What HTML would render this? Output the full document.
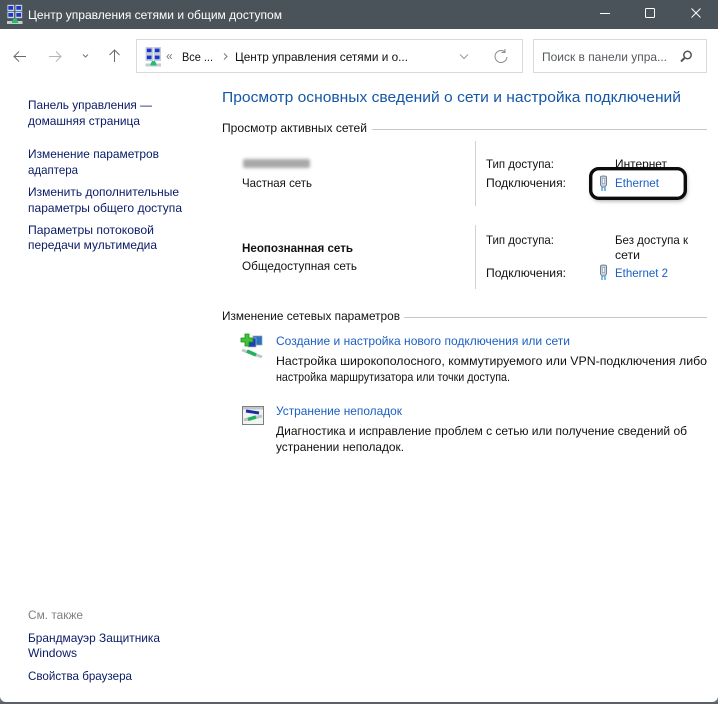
<!DOCTYPE html>
<html lang="ru"><head><meta charset="utf-8"><title>Центр управления сетями и общим доступом</title>
<style>
html,body{margin:0;padding:0;background:#fff}
svg{display:block}
text{font-family:"Liberation Sans","DejaVu Sans",sans-serif;font-size:12px;fill:#111;white-space:pre}
.n{fill:#0a1a66}
.l{fill:#1a5fc4}
.h{fill:#55595e}
</style></head><body>
<svg width="718" height="704" viewBox="0 0 718 704" xmlns="http://www.w3.org/2000/svg">
<defs>
<filter id="sh" x="-20%" y="-40%" width="140%" height="180%"><feGaussianBlur stdDeviation="2"/></filter>
<filter id="bl" x="-20%" y="-60%" width="140%" height="220%"><feGaussianBlur stdDeviation="1.5"/></filter>
<g id="net">
<rect x="0" y="0" width="6.500" height="6" fill="#dfe6ee" stroke="#9aa6b4" stroke-width=".5"/><rect x=".8" y="1" width="4.800" height="3.800" fill="#1c36c8"/>
<rect x="8" y="0" width="6.500" height="6" fill="#dfe6ee" stroke="#9aa6b4" stroke-width=".5"/><rect x="8.800" y="1" width="4.800" height="3.800" fill="#1c36c8"/>
<rect x="0" y="7" width="6.500" height="6" fill="#dfe6ee" stroke="#9aa6b4" stroke-width=".5"/><rect x=".8" y="8" width="4.800" height="3.800" fill="#1c36c8"/>
<rect x="8" y="7" width="6.500" height="6" fill="#dfe6ee" stroke="#9aa6b4" stroke-width=".5"/><rect x="8.800" y="8" width="4.800" height="3.800" fill="#1c36c8"/>
<rect x="-.5" y="16" width="15.500" height="3" fill="#c4cbd0"/><path d="M4.500 16.500L6 13.500H9L10.500 16.500V18H4.500Z" fill="#22c06a"/>
</g>
<g id="plug">
<path d="M-3 0Q-3-1 0-1T3 0V8L1.500 10H-1.500L-3 8Z" fill="#c6d1dc" stroke="#6d8195" stroke-width="1"/>
<rect x="-1.200" y="1.500" width="2.400" height="5" fill="#f2f6f9" stroke="#8698aa" stroke-width=".6"/>
<path d="M-1.500 10.500V14M1.500 10.500V14" stroke="#2c9cea" stroke-width="1.300"/>
</g>
</defs>
<rect width="718" height="704" fill="#fff"/>
<rect width="718" height="29" fill="#4b535a"/>
<use href="#net" transform="translate(7.500 5)"/>
<text x="28" y="19" textLength="254" lengthAdjust="spacingAndGlyphs" style="fill:#fff">Центр управления сетями и общим доступом</text>
<path d="M600 13.500H610" stroke="#fff" fill="none"/>
<rect x="645.500" y="8.500" width="9" height="9" rx="1" stroke="#fff" fill="none"/>
<path d="M691.500 8.500L700.500 17.500M700.500 8.500L691.500 17.500" stroke="#fff" fill="none"/>

<g fill="none" stroke-width="1">
<path d="M14 56.500H26M19 51.500L14 56.500L19 61.500" stroke="#6a6a6a"/>
<path d="M49 56.500H61M56 51.500L61 56.500L56 61.500" stroke="#b4b4b4"/>
<path d="M83 54.500L85.500 57L88 54.500" stroke="#777"/>
<path d="M114.500 62V50M109.500 55L114.500 50L119.500 55" stroke="#6a6a6a"/>
</g>
<rect x="136.500" y="39.500" width="386" height="33" fill="#fff" stroke="#d9d9d9"/>
<use href="#net" transform="translate(146 47.500)"/>
<text x="166" y="60" textLength="9" style="fill:#777">«</text>
<text x="182" y="61" textLength="31" lengthAdjust="spacingAndGlyphs">Все ...</text>
<path d="M224 53.500L227 56.500L224 59.500" fill="none" stroke="#777"/>
<text x="235" y="61" textLength="173" lengthAdjust="spacingAndGlyphs">Центр управления сетями и о...</text>
<path d="M460 54.500L464 58.500L468 54.500" fill="none" stroke="#999"/>
<path d="M505 52A6 6 0 1 0 507 57M505 49V52.500H501.500" fill="none" stroke="#8a8a8a"/>
<rect x="533.500" y="39.500" width="173" height="33" fill="#fff" stroke="#d9d9d9"/>
<text x="542" y="61" textLength="125" lengthAdjust="spacingAndGlyphs" class="h">Поиск в панели упра...</text>
<circle cx="687.500" cy="55" r="3.700" fill="none" stroke="#555" stroke-width="1.500"/><path d="M684.500 58L681 61.500" stroke="#555" stroke-width="2"/>

<text x="222" y="102" textLength="459" lengthAdjust="spacingAndGlyphs" style="fill:#1557a6;font-size:15px">Просмотр основных сведений о сети и настройка подключений</text>

<text x="28" y="109" textLength="124" lengthAdjust="spacingAndGlyphs" class="n">Панель управления —</text>
<text x="28" y="125" textLength="112" lengthAdjust="spacingAndGlyphs" class="n">домашняя страница</text>
<text x="28" y="158" textLength="131" lengthAdjust="spacingAndGlyphs" class="n">Изменение параметров</text>
<text x="28" y="174" textLength="50" lengthAdjust="spacingAndGlyphs" class="n">адаптера</text>
<text x="28" y="196" textLength="151" lengthAdjust="spacingAndGlyphs" class="n">Изменить дополнительные</text>
<text x="28" y="212" textLength="154" lengthAdjust="spacingAndGlyphs" class="n">параметры общего доступа</text>
<text x="28" y="234" textLength="126" lengthAdjust="spacingAndGlyphs" class="n">Параметры потоковой</text>
<text x="28" y="249" textLength="129" lengthAdjust="spacingAndGlyphs" class="n">передачи мультимедиа</text>
<text x="28" y="619" textLength="55" lengthAdjust="spacingAndGlyphs" style="fill:#808080">См. также</text>
<text x="28" y="642" textLength="132" lengthAdjust="spacingAndGlyphs" class="n">Брандмауэр Защитника</text>
<text x="28" y="657" textLength="49" lengthAdjust="spacingAndGlyphs" class="n">Windows</text>
<text x="28" y="680" textLength="104" lengthAdjust="spacingAndGlyphs" class="n">Свойства браузера</text>

<text x="222" y="132" textLength="145" lengthAdjust="spacingAndGlyphs">Просмотр активных сетей</text>
<path d="M372 129.500H707" stroke="#c8c8c8"/>
<rect x="243" y="159" width="67" height="9" rx="2" fill="#a8a8a8" filter="url(#bl)"/>
<text x="242" y="187" textLength="70" lengthAdjust="spacingAndGlyphs">Частная сеть</text>
<text x="242" y="252" textLength="111" lengthAdjust="spacingAndGlyphs" style="font-weight:bold;fill:#111">Неопознанная сеть</text>
<text x="242" y="270" textLength="115" lengthAdjust="spacingAndGlyphs">Общедоступная сеть</text>
<path d="M475.500 141V206M475.500 225V289" stroke="#d0d0d0"/>
<text x="486" y="168" textLength="68" lengthAdjust="spacingAndGlyphs">Тип доступа:</text>
<text x="486" y="187" textLength="80" lengthAdjust="spacingAndGlyphs">Подключения:</text>
<text x="615" y="168" textLength="52" lengthAdjust="spacingAndGlyphs">Интернет</text>
<rect x="591" y="170" width="96" height="31" rx="9" fill="#000" opacity=".35" filter="url(#sh)"/>
<rect x="590.700" y="168.700" width="94.600" height="29.600" rx="8" fill="#fff" stroke="#0c0c0c" stroke-width="3.400"/>
<use href="#plug" transform="translate(603.500 177)"/>
<text x="615" y="187" textLength="44" lengthAdjust="spacingAndGlyphs" class="l">Ethernet</text>
<text x="486" y="244" textLength="68" lengthAdjust="spacingAndGlyphs">Тип доступа:</text>
<text x="615" y="244" textLength="73" lengthAdjust="spacingAndGlyphs">Без доступа к</text>
<text x="615" y="259" textLength="25" lengthAdjust="spacingAndGlyphs">сети</text>
<text x="486" y="277" textLength="80" lengthAdjust="spacingAndGlyphs">Подключения:</text>
<use href="#plug" transform="translate(603.500 266)"/>
<text x="615" y="277" textLength="53" lengthAdjust="spacingAndGlyphs" class="l">Ethernet 2</text>

<text x="222" y="320" textLength="178" lengthAdjust="spacingAndGlyphs">Изменение сетевых параметров</text>
<path d="M404 317.500H707" stroke="#c8c8c8"/>

<g>
<rect x="253" y="336" width="9" height="9" fill="#2f6fc0" stroke="#8aa0bd" stroke-width=".7"/>
<rect x="248" y="338" width="8" height="9" fill="#1c3fb8" stroke="#a9b8cc" stroke-width=".7"/>
<path d="M242 350L262 357" stroke="#c2c8c8" stroke-width="3"/>
<path d="M247 351L256 355" stroke="#23b060" stroke-width="3.500"/>
<path d="M245 334H249V338H253V342H249V346H245V342H241V338H245Z" fill="#3fc434" stroke="#1f8a22" stroke-width=".8"/>
</g>
<text x="276" y="345" textLength="294" lengthAdjust="spacingAndGlyphs" class="l">Создание и настройка нового подключения или сети</text>
<text x="276" y="365" textLength="431" lengthAdjust="spacingAndGlyphs">Настройка широкополосного, коммутируемого или VPN-подключения либо</text>
<text x="276" y="381" textLength="234" lengthAdjust="spacingAndGlyphs">настройка маршрутизатора или точки доступа.</text>

<g>
<rect x="242.500" y="406.500" width="21" height="18" fill="#f2f4f4" stroke="#7b7f80"/>
<rect x="243" y="407" width="20" height="2.500" fill="#c2c6c8"/>
<path d="M246 411L259 413" stroke="#1a2ea0" stroke-width="3"/>
<path d="M244 420L262 416" stroke="#bfc6c6" stroke-width="3"/>
<path d="M248 419.500L256 417" stroke="#22b05c" stroke-width="3.500"/>
</g>
<text x="276" y="415" textLength="126" lengthAdjust="spacingAndGlyphs" class="l">Устранение неполадок</text>
<text x="276" y="435" textLength="411" lengthAdjust="spacingAndGlyphs">Диагностика и исправление проблем с сетью или получение сведений об</text>
<text x="276" y="451" textLength="128" lengthAdjust="spacingAndGlyphs">устранении неполадок.</text>

<rect x="0" y="702" width="718" height="2" fill="#5a6066"/>
<path d="M0 697Q1 701 5 702H0ZM718 697Q717 701 713 702H718Z" fill="#6b7378"/>
</svg>
</body></html>
